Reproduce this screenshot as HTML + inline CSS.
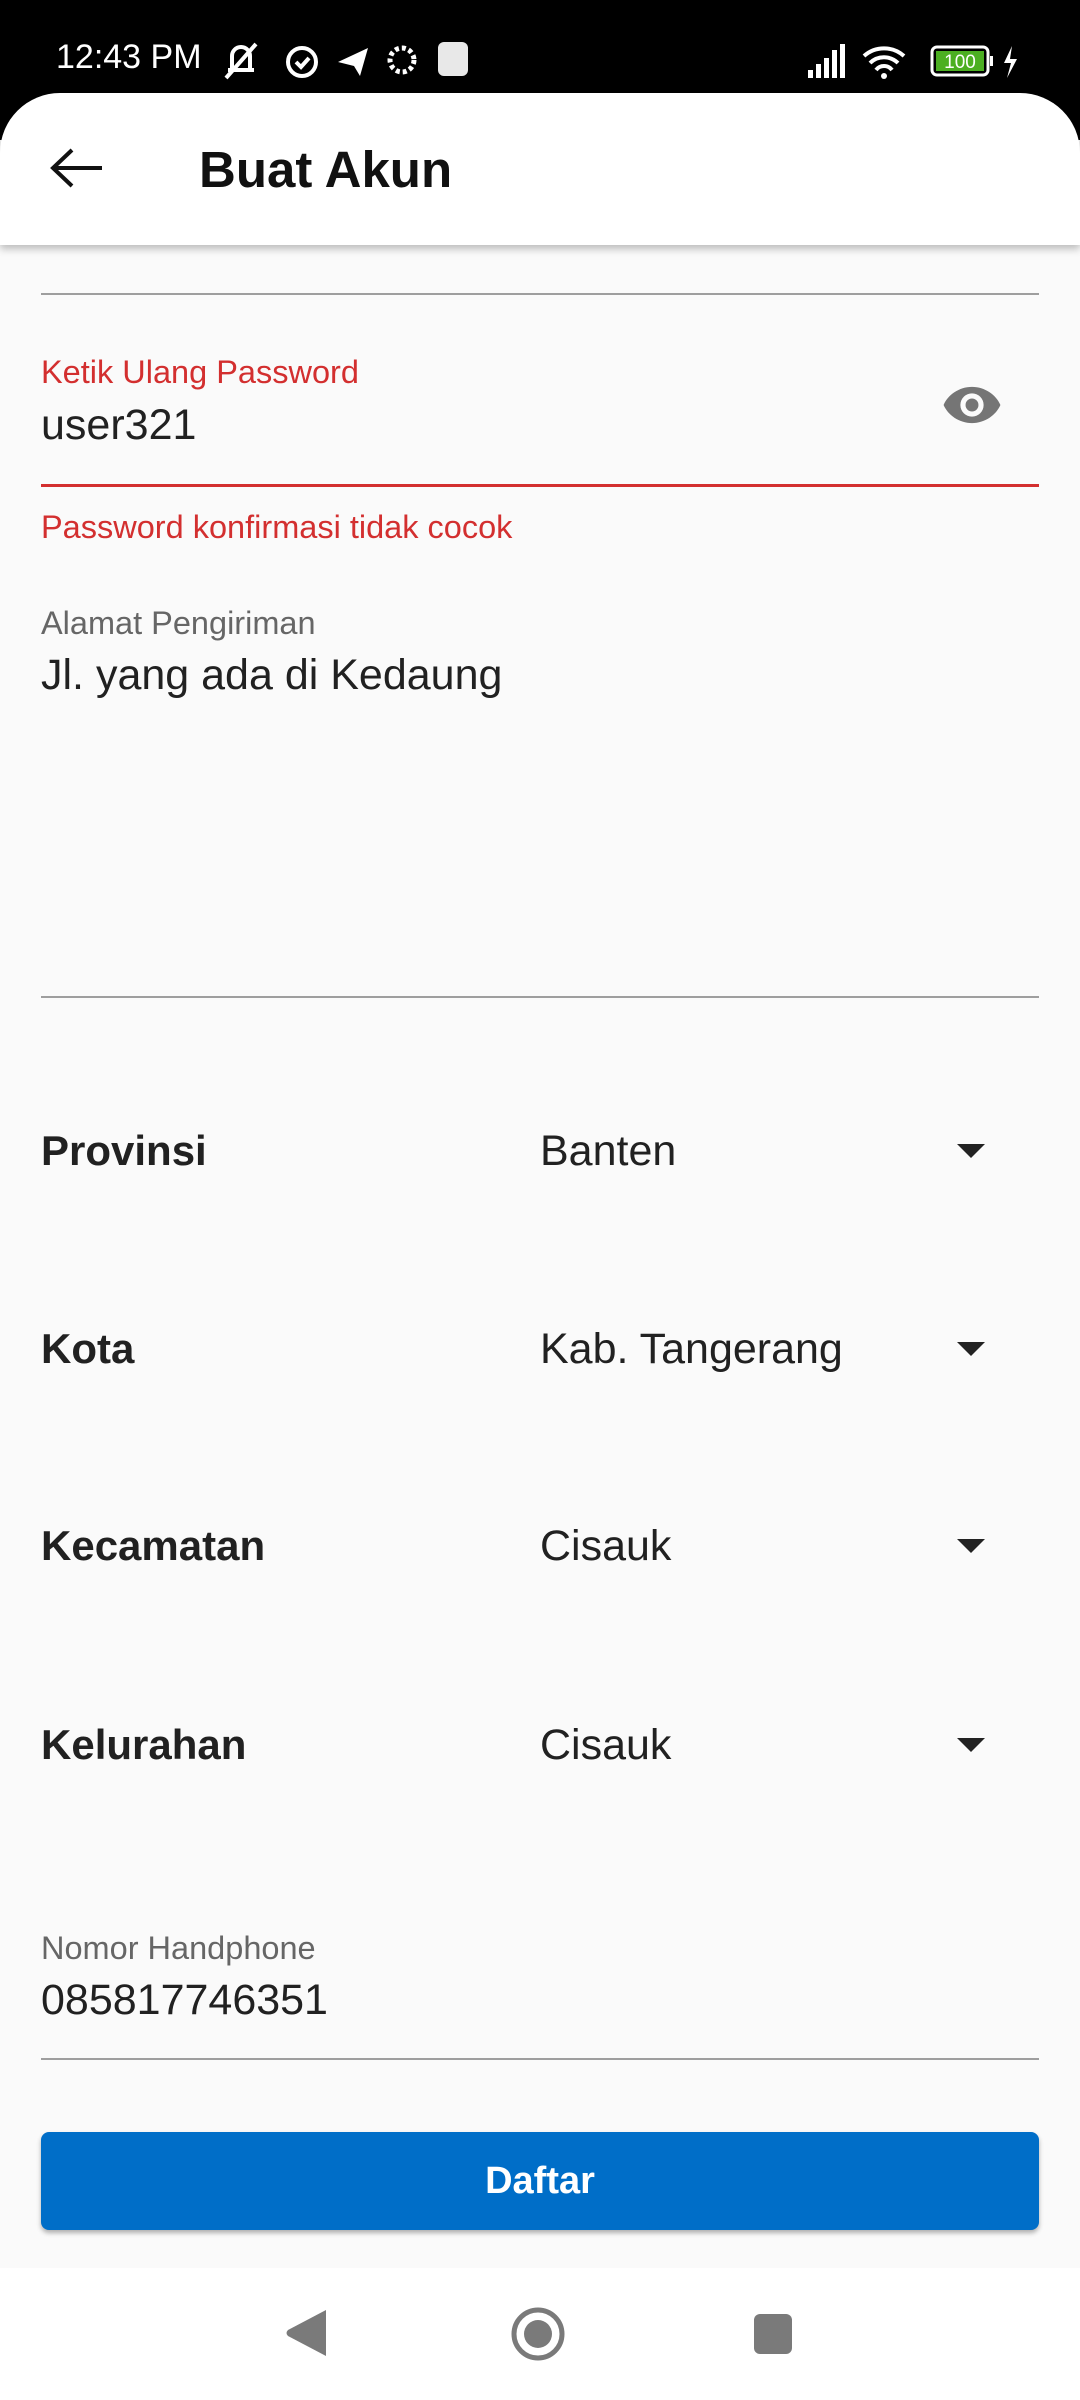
<!DOCTYPE html>
<html><head><meta charset="utf-8"><style>
body{margin:0;width:1080px;height:2400px;background:#fafafa;font-family:"Liberation Sans",sans-serif;position:relative;overflow:hidden}
.a{position:absolute;white-space:nowrap}
.line{position:absolute;left:41px;width:998px;height:2px;background:#9e9e9e}
.lab{font-size:32.5px;color:#666}
.val{font-size:43px;color:#212121}
.b{font-size:42px;font-weight:bold;color:#212121}
.arr{position:absolute;left:957px;width:0;height:0;border-left:14px solid transparent;border-right:14px solid transparent;border-top:14px solid #222}
</style></head><body>
<div class="a" style="left:0;top:0;width:1080px;height:140px;background:#000"></div>
<div class="a" style="left:56px;top:38px;color:#fff;font-size:34px">12:43 PM</div>
<svg class="a" style="left:220px;top:38px" width="250" height="44" viewBox="0 0 250 44">
<g fill="none" stroke="#fff" stroke-width="4"><path d="M8 32h26M12 32V18a9 9 0 0 1 18 0v14M6 40L36 6"/><circle cx="82" cy="24" r="14"/><path d="M76 24l5 5 8-9"/></g>
<path d="M118 24l30-14-8 28-6-10z" fill="#fff"/>
<circle cx="182" cy="22" r="12" fill="none" stroke="#fff" stroke-width="5" stroke-dasharray="4 3"/>
<rect x="218" y="4" width="30" height="34" rx="6" fill="#e8e8e8"/></svg>
<svg class="a" style="left:806px;top:42px" width="230" height="40" viewBox="0 0 230 40">
<g fill="#fff"><rect x="2" y="28" width="5" height="8"/><rect x="10" y="22" width="5" height="14"/><rect x="18" y="16" width="5" height="20"/><rect x="26" y="8" width="5" height="28"/><rect x="34" y="2" width="5" height="34"/></g>
<path d="M58 14a30 30 0 0 1 40 0M64 21a20 20 0 0 1 28 0M70 28a10 10 0 0 1 16 0" stroke="#fff" stroke-width="4" fill="none"/><circle cx="78" cy="34" r="3" fill="#fff"/>
<rect x="126" y="5" width="56" height="28" rx="5" fill="none" stroke="#fff" stroke-width="3"/><rect x="130" y="9" width="48" height="20" fill="#4caf22"/><text x="154" y="26" font-size="19" fill="#fff" text-anchor="middle" font-family="Liberation Sans">100</text><rect x="184" y="14" width="3" height="10" fill="#fff"/>
<path d="M206 4l-8 17h7l-4 15 10-19h-7z" fill="#fff"/></svg>
<div class="a" style="left:0;top:93px;width:1080px;height:152px;background:#fff;border-radius:60px 60px 0 0;box-shadow:0 4px 8px rgba(0,0,0,.25)"></div>
<svg class="a" style="left:48px;top:146px" width="56" height="44" viewBox="0 0 56 44"><path d="M54 22H6M24 4L5 22l19 18" stroke="#111" stroke-width="4" fill="none"/></svg>
<div class="a" style="left:199px;top:140px;font-size:51px;font-weight:bold;color:#111">Buat Akun</div>
<div class="line" style="top:293px"></div>
<div class="a lab" style="left:41px;top:354px;color:#d32f2f">Ketik Ulang Password</div>
<div class="a val" style="left:41px;top:401px">user321</div>
<svg class="a" style="left:941px;top:384px" width="62" height="42" viewBox="0 0 24 16"><path d="M12 1C7 1 2.700 4.100 1 8c1.700 3.900 6 7 11 7s9.300-3.100 11-7c-1.700-3.900-6-7-11-7zm0 11.500a4.500 4.500 0 1 1 0-9 4.500 4.500 0 0 1 0 9zm0-7a2.500 2.500 0 1 0 0 5 2.500 2.500 0 0 0 0-5z" fill="#757575"/></svg>
<div class="a" style="left:41px;top:484px;width:998px;height:3px;background:#d32f2f"></div>
<div class="a lab" style="left:41px;top:509px;color:#d32f2f">Password konfirmasi tidak cocok</div>
<div class="a lab" style="left:41px;top:605px">Alamat Pengiriman</div>
<div class="a val" style="left:41px;top:651px">Jl. yang ada di Kedaung</div>
<div class="line" style="top:996px"></div>
<div class="a b" style="left:41px;top:1127px">Provinsi</div><div class="a val" style="left:540px;top:1127px">Banten</div><div class="arr" style="top:1144px"></div>
<div class="a b" style="left:41px;top:1325px">Kota</div><div class="a val" style="left:540px;top:1325px">Kab. Tangerang</div><div class="arr" style="top:1342px"></div>
<div class="a b" style="left:41px;top:1522px">Kecamatan</div><div class="a val" style="left:540px;top:1522px">Cisauk</div><div class="arr" style="top:1539px"></div>
<div class="a b" style="left:41px;top:1721px">Kelurahan</div><div class="a val" style="left:540px;top:1721px">Cisauk</div><div class="arr" style="top:1738px"></div>
<div class="a lab" style="left:41px;top:1930px">Nomor Handphone</div>
<div class="a val" style="left:41px;top:1976px">085817746351</div>
<div class="line" style="top:2058px"></div>
<div class="a" style="left:41px;top:2132px;width:998px;height:98px;background:#006ec8;border-radius:8px;box-shadow:0 3px 5px rgba(0,0,0,.3);color:#fff;font-size:38px;font-weight:bold;text-align:center;line-height:98px">Daftar</div>
<div class="a" style="left:0;top:2268px;width:1080px;height:132px;background:#fff"></div>
<svg class="a" style="left:280px;top:2300px" width="520" height="66" viewBox="0 0 520 66">
<path d="M46 10V56L8 36q-3-3 0-6z" fill="#7a7a7a"/>
<circle cx="258" cy="34" r="24" fill="none" stroke="#7a7a7a" stroke-width="5"/><circle cx="258" cy="34" r="14" fill="#7a7a7a"/>
<rect x="474" y="14" width="38" height="40" rx="6" fill="#7a7a7a"/></svg>
</body></html>
